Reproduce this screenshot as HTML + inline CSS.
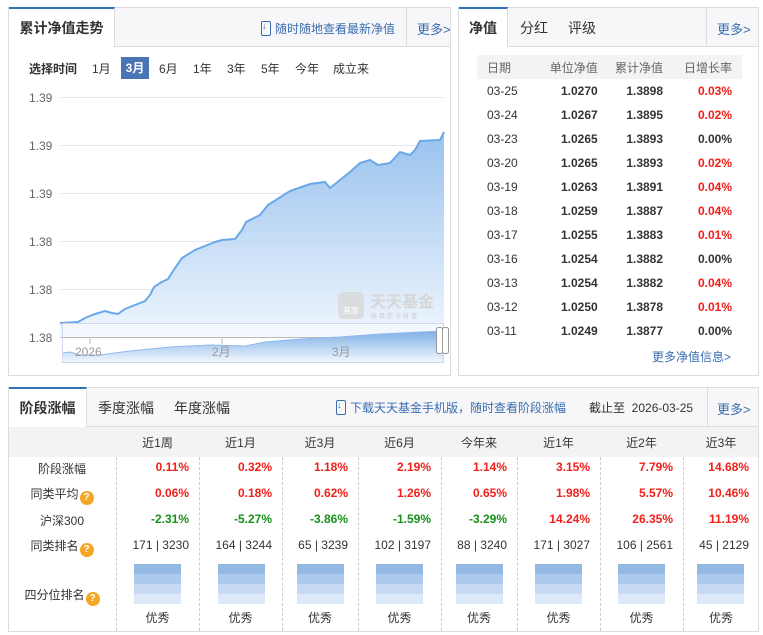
<!DOCTYPE html>
<html><head><meta charset="utf-8"><style>
*{margin:0;padding:0;box-sizing:border-box}
body{width:763px;height:635px;background:#fff;font-family:"Liberation Sans","Noto Sans CJK SC",sans-serif;font-size:12px;color:#333;position:relative;overflow:hidden}
.abs{position:absolute;white-space:nowrap}
.panel{position:absolute;border:1px solid #dcdcdc}
.tabbar{position:absolute;left:0;top:0;right:0;background:#f7f7f9;border-bottom:1px solid #dcdcdc}
.tab{position:absolute;top:-1px;background:#fff;border-top:2px solid #3070b8;border-right:1px solid #dcdcdc;font-size:14px;font-weight:bold;color:#333;text-align:center}
.t2{position:absolute;font-size:14px;color:#333;white-space:nowrap}
.more{position:absolute;color:#3a6db0;font-size:13px;white-space:nowrap}
.blue{color:#3a6db0}
.red{color:#f0201a;font-weight:bold}
.green{color:#18901a;font-weight:bold}
.q{display:inline-block;width:14px;height:14px;border-radius:7px;background:#f5a623;color:#fff;font-size:10px;line-height:14px;text-align:center;font-weight:bold;vertical-align:-2px;margin-left:1px}
.phone{display:inline-block;width:10px;height:15px;border:1.5px solid #3a6db0;border-radius:2px;vertical-align:-3px;margin-right:4px;position:relative}
.phone:after{content:"↓";position:absolute;left:0;top:-1px;font-size:9px;color:#3a6db0;font-weight:bold}
.ts{position:absolute;top:52px;font-size:12px}
</style></head><body>

<!-- left panel -->
<div class="panel" style="left:8px;top:7px;width:443px;height:369px">
 <div class="tabbar" style="height:39px">
  <div class="tab" style="left:0;width:106px;height:40px;line-height:38px">累计净值走势</div>
  <div class="abs blue" style="left:252px;top:12px;font-size:12px"><span class="phone"></span>随时随地查看最新净值</div>
  <div class="abs" style="left:397px;top:0;width:1px;height:39px;background:#dcdcdc"></div>
  <div class="more" style="left:408px;top:11px">更多&gt;</div>
 </div>
 <div class="ts" style="left:20px;font-weight:bold">选择时间</div>
 <div class="ts" style="left:83px">1月</div>
 <div class="abs" style="top:49px;left:112px;width:28px;height:22px;background:#4a74b4;color:#fff;font-weight:bold;font-size:12px;text-align:center;line-height:22px">3月</div>
 <div class="ts" style="left:150px">6月</div>
 <div class="ts" style="left:184px">1年</div>
 <div class="ts" style="left:218px">3年</div>
 <div class="ts" style="left:252px">5年</div>
 <div class="ts" style="left:286px">今年</div>
 <div class="ts" style="left:324px">成立来</div>
</div>
<svg class="abs" style="left:0;top:0" width="460" height="380">
 <defs>
  <linearGradient id="g" x1="0" y1="0" x2="0" y2="1"><stop offset="0" stop-color="#8dbbec"/><stop offset="1" stop-color="#eef5fd"/></linearGradient>
  <linearGradient id="g2" x1="0" y1="0" x2="0" y2="1"><stop offset="0" stop-color="#7fb0e8"/><stop offset="1" stop-color="#f0f6fd"/></linearGradient>
 </defs>
 <g stroke="#e3e6ee" stroke-width="1">
  <line x1="60" y1="97.5" x2="444" y2="97.5"/><line x1="60" y1="145.5" x2="444" y2="145.5"/>
  <line x1="60" y1="193.5" x2="444" y2="193.5"/><line x1="60" y1="241.5" x2="444" y2="241.5"/>
  <line x1="60" y1="289.5" x2="444" y2="289.5"/>
 </g>
 <g fill="#666" font-size="12" font-family="Liberation Sans">
  <text x="29" y="102">1.39</text><text x="29" y="150">1.39</text><text x="29" y="198">1.39</text>
  <text x="29" y="246">1.38</text><text x="29" y="294">1.38</text><text x="29" y="342">1.38</text>
 </g>
 <path d="M60,323 L78,322 L85,318 L95,314 L105,311 L112,313 L118,314 L125,309 L135,305 L145,301 L150,295 L154,287 L160,283 L168,279 L175,268 L182,258 L195,250 L205,246 L215,242 L222,240 L235,239 L242,230 L246,222 L260,215 L268,205 L290,191 L310,184 L325,182 L330,188 L340,180 L350,172 L360,163 L370,160 L378,165 L390,163 L400,152 L410,155 L415,150 L420,141 L440,140 L444,132 L444,337 L60,337 Z" fill="url(#g)" opacity="0.9"/>
 <path d="M60,323 L78,322 L85,318 L95,314 L105,311 L112,313 L118,314 L125,309 L135,305 L145,301 L150,295 L154,287 L160,283 L168,279 L175,268 L182,258 L195,250 L205,246 L215,242 L222,240 L235,239 L242,230 L246,222 L260,215 L268,205 L290,191 L310,184 L325,182 L330,188 L340,180 L350,172 L360,163 L370,160 L378,165 L390,163 L400,152 L410,155 L415,150 L420,141 L440,140 L444,132" fill="none" stroke="#6aa8e8" stroke-width="2"/>
 <rect x="338" y="292" width="26" height="27" rx="5" fill="#d8d8d8" opacity="0.8"/>
 <text x="343" y="313" font-size="8" fill="#fff" font-family="Noto Sans CJK SC">基金</text>
 <text x="370" y="307" font-size="16" font-weight="bold" fill="#d6d6d6" font-family="Noto Sans CJK SC">天天基金</text>
 <text x="371" y="318" font-size="6" fill="#ccc" font-family="Noto Sans CJK SC" letter-spacing="2">链接您与财富</text>
 <rect x="62" y="323" width="382" height="40" fill="#fff" opacity="0.35"/>
 <line x1="60" y1="337.5" x2="444" y2="337.5" stroke="#bbb"/>
 <path d="M62,353 L70,352 L80,355 L100,355 L130,351 L170,347 L210,345 L245,346 L265,342 L300,339 L340,337 L380,334 L420,332 L444,331 L444,362 L62,362 Z" fill="url(#g2)"/>
 <path d="M62,353 L70,352 L80,355 L100,355 L130,351 L170,347 L210,345 L245,346 L265,342 L300,339 L340,337 L380,334 L420,332 L444,331" fill="none" stroke="#8fb9ea" stroke-width="1"/>
 <rect x="62.5" y="323.5" width="381" height="39" fill="none" stroke="#cfd8e8"/>
 <line x1="90" y1="337" x2="90" y2="344" stroke="#bbb"/><line x1="222" y1="337" x2="222" y2="344" stroke="#bbb"/><line x1="342" y1="337" x2="342" y2="344" stroke="#bbb"/>
 <g fill="#999" font-size="12" font-family="Liberation Sans,Noto Sans CJK SC"><text x="75" y="356">2026</text><text x="212" y="356">2月</text><text x="332" y="356">3月</text></g>
 <rect x="436.5" y="327.5" width="6" height="26" rx="2" fill="#fff" stroke="#999"/>
 <rect x="442.5" y="327.5" width="6" height="26" rx="2" fill="#fff" stroke="#999"/>
</svg>

<!-- right panel -->
<div class="panel" style="left:458px;top:7px;width:301px;height:369px">
 <div class="tabbar" style="height:39px">
  <div class="tab" style="left:0;width:49px;height:40px;line-height:38px">净值</div>
  <div class="t2" style="left:61px;top:10px">分红</div>
  <div class="t2" style="left:109px;top:10px">评级</div>
  <div class="abs" style="left:247px;top:0;width:1px;height:39px;background:#dcdcdc"></div>
  <div class="more" style="left:258px;top:11px">更多&gt;</div>
 </div>
 <div class="abs" style="left:18px;top:47px;width:265px;height:24px;background:#f3f3f3"></div>
 <table class="abs" style="left:18px;top:47px;width:265px;border-collapse:collapse;font-size:12px">
  <tr style="height:24px;color:#666"><td style="padding-left:10px">日期</td><td align="right">单位净值</td><td align="right">累计净值</td><td align="right" style="padding-right:10px">日增长率</td></tr>
  <tr style="height:24px"><td style="padding-left:10px">03-25</td><td align="right"><b>1.0270</b></td><td align="right"><b>1.3898</b></td><td align="right" class="red" style="padding-right:10px">0.03%</td></tr>
  <tr style="height:24px"><td style="padding-left:10px">03-24</td><td align="right"><b>1.0267</b></td><td align="right"><b>1.3895</b></td><td align="right" class="red" style="padding-right:10px">0.02%</td></tr>
  <tr style="height:24px"><td style="padding-left:10px">03-23</td><td align="right"><b>1.0265</b></td><td align="right"><b>1.3893</b></td><td align="right" style="padding-right:10px;font-weight:bold">0.00%</td></tr>
  <tr style="height:24px"><td style="padding-left:10px">03-20</td><td align="right"><b>1.0265</b></td><td align="right"><b>1.3893</b></td><td align="right" class="red" style="padding-right:10px">0.02%</td></tr>
  <tr style="height:24px"><td style="padding-left:10px">03-19</td><td align="right"><b>1.0263</b></td><td align="right"><b>1.3891</b></td><td align="right" class="red" style="padding-right:10px">0.04%</td></tr>
  <tr style="height:24px"><td style="padding-left:10px">03-18</td><td align="right"><b>1.0259</b></td><td align="right"><b>1.3887</b></td><td align="right" class="red" style="padding-right:10px">0.04%</td></tr>
  <tr style="height:24px"><td style="padding-left:10px">03-17</td><td align="right"><b>1.0255</b></td><td align="right"><b>1.3883</b></td><td align="right" class="red" style="padding-right:10px">0.01%</td></tr>
  <tr style="height:24px"><td style="padding-left:10px">03-16</td><td align="right"><b>1.0254</b></td><td align="right"><b>1.3882</b></td><td align="right" style="padding-right:10px;font-weight:bold">0.00%</td></tr>
  <tr style="height:24px"><td style="padding-left:10px">03-13</td><td align="right"><b>1.0254</b></td><td align="right"><b>1.3882</b></td><td align="right" class="red" style="padding-right:10px">0.04%</td></tr>
  <tr style="height:24px"><td style="padding-left:10px">03-12</td><td align="right"><b>1.0250</b></td><td align="right"><b>1.3878</b></td><td align="right" class="red" style="padding-right:10px">0.01%</td></tr>
  <tr style="height:24px"><td style="padding-left:10px">03-11</td><td align="right"><b>1.0249</b></td><td align="right"><b>1.3877</b></td><td align="right" style="padding-right:10px;font-weight:bold">0.00%</td></tr>
 </table>
 <div class="abs blue" style="left:193px;top:340px">更多净值信息&gt;</div>
</div>

<!-- bottom panel -->
<div class="panel" style="left:8px;top:387px;width:751px;height:245px">
 <div class="tabbar" style="height:39px">
  <div class="tab" style="left:0;width:78px;height:40px;line-height:38px">阶段涨幅</div>
  <div class="t2" style="left:89px;top:10px">季度涨幅</div>
  <div class="t2" style="left:165px;top:10px">年度涨幅</div>
  <div class="abs blue" style="left:327px;top:11px;font-size:12px"><span class="phone"></span>下载天天基金手机版，随时查看阶段涨幅</div>
  <div class="abs" style="left:580px;top:11px;font-size:12px">截止至&nbsp;&nbsp;2026-03-25</div>
  <div class="abs" style="left:698px;top:0;width:1px;height:39px;background:#dcdcdc"></div>
  <div class="more" style="left:708px;top:11px">更多&gt;</div>
 </div>
 <div class="abs" style="left:0;top:39px;width:749px;height:30px;background:#f3f3f3"></div>
</div>
<div class="abs" style="left:0;top:0;width:763px;height:635px">
 <div class="abs" style="top:434px;left:116px;width:83px;text-align:center">近1周</div>
 <div class="abs" style="top:434px;left:199px;width:83px;text-align:center">近1月</div>
 <div class="abs" style="top:434px;left:282px;width:76px;text-align:center">近3月</div>
 <div class="abs" style="top:434px;left:358px;width:83px;text-align:center">近6月</div>
 <div class="abs" style="top:434px;left:441px;width:76px;text-align:center">今年来</div>
 <div class="abs" style="top:434px;left:517px;width:83px;text-align:center">近1年</div>
 <div class="abs" style="top:434px;left:600px;width:83px;text-align:center">近2年</div>
 <div class="abs" style="top:434px;left:683px;width:76px;text-align:center">近3年</div>
 <div class="abs" style="left:116px;top:457px;height:174px;border-left:1px dashed #ccc"></div>
 <div class="abs" style="left:199px;top:457px;height:174px;border-left:1px dashed #ccc"></div>
 <div class="abs" style="left:282px;top:457px;height:174px;border-left:1px dashed #ccc"></div>
 <div class="abs" style="left:358px;top:457px;height:174px;border-left:1px dashed #ccc"></div>
 <div class="abs" style="left:441px;top:457px;height:174px;border-left:1px dashed #ccc"></div>
 <div class="abs" style="left:517px;top:457px;height:174px;border-left:1px dashed #ccc"></div>
 <div class="abs" style="left:600px;top:457px;height:174px;border-left:1px dashed #ccc"></div>
 <div class="abs" style="left:683px;top:457px;height:174px;border-left:1px dashed #ccc"></div>
 <div class="abs" style="top:460px;left:8px;width:108px;text-align:center">阶段涨幅</div>
 <div class="abs" style="top:485px;left:8px;width:108px;text-align:center">同类平均<span class="q">?</span></div>
 <div class="abs" style="top:512px;left:8px;width:108px;text-align:center">沪深300</div>
 <div class="abs" style="top:537px;left:8px;width:108px;text-align:center">同类排名<span class="q">?</span></div>
 <div class="abs" style="top:586px;left:8px;width:108px;text-align:center">四分位排名<span class="q">?</span></div>
 <table class="abs" style="left:116px;top:454px;width:643px;border-collapse:collapse;table-layout:fixed">
  <colgroup><col style="width:83px"><col style="width:83px"><col style="width:76px"><col style="width:83px"><col style="width:76px"><col style="width:83px"><col style="width:83px"><col style="width:76px"></colgroup>
  <tr style="height:26px" class="red"><td align="right" style="padding-right:10px">0.11%</td><td align="right" style="padding-right:10px">0.32%</td><td align="right" style="padding-right:10px">1.18%</td><td align="right" style="padding-right:10px">2.19%</td><td align="right" style="padding-right:10px">1.14%</td><td align="right" style="padding-right:10px">3.15%</td><td align="right" style="padding-right:10px">7.79%</td><td align="right" style="padding-right:10px">14.68%</td></tr>
  <tr style="height:26px" class="red"><td align="right" style="padding-right:10px">0.06%</td><td align="right" style="padding-right:10px">0.18%</td><td align="right" style="padding-right:10px">0.62%</td><td align="right" style="padding-right:10px">1.26%</td><td align="right" style="padding-right:10px">0.65%</td><td align="right" style="padding-right:10px">1.98%</td><td align="right" style="padding-right:10px">5.57%</td><td align="right" style="padding-right:10px">10.46%</td></tr>
  <tr style="height:26px"><td align="right" class="green" style="padding-right:10px">-2.31%</td><td align="right" class="green" style="padding-right:10px">-5.27%</td><td align="right" class="green" style="padding-right:10px">-3.86%</td><td align="right" class="green" style="padding-right:10px">-1.59%</td><td align="right" class="green" style="padding-right:10px">-3.29%</td><td align="right" class="red" style="padding-right:10px">14.24%</td><td align="right" class="red" style="padding-right:10px">26.35%</td><td align="right" class="red" style="padding-right:10px">11.19%</td></tr>
  <tr style="height:26px"><td align="right" style="padding-right:10px">171 | 3230</td><td align="right" style="padding-right:10px">164 | 3244</td><td align="right" style="padding-right:10px">65 | 3239</td><td align="right" style="padding-right:10px">102 | 3197</td><td align="right" style="padding-right:10px">88 | 3240</td><td align="right" style="padding-right:10px">171 | 3027</td><td align="right" style="padding-right:10px">106 | 2561</td><td align="right" style="padding-right:10px">45 | 2129</td></tr>
 </table>
 <svg class="abs" style="left:0;top:0" width="763" height="635">
  <defs>
  <g id="qb">
   <rect x="0" y="564" width="47" height="10" fill="#94b8e4"/><rect x="0" y="574" width="47" height="10" fill="#adc9ee"/>
   <rect x="0" y="584" width="47" height="10" fill="#c6daf4"/><rect x="0" y="594" width="47" height="10" fill="#dde9f9"/>
  </g>
  </defs>
  <use href="#qb" x="134"/><use href="#qb" x="218"/><use href="#qb" x="297"/><use href="#qb" x="376"/><use href="#qb" x="456"/><use href="#qb" x="535"/><use href="#qb" x="618"/><use href="#qb" x="697"/>
 </svg>
 <div class="abs" style="top:609px;left:116px;width:83px;text-align:center">优秀</div>
 <div class="abs" style="top:609px;left:199px;width:83px;text-align:center">优秀</div>
 <div class="abs" style="top:609px;left:282px;width:76px;text-align:center">优秀</div>
 <div class="abs" style="top:609px;left:358px;width:83px;text-align:center">优秀</div>
 <div class="abs" style="top:609px;left:441px;width:76px;text-align:center">优秀</div>
 <div class="abs" style="top:609px;left:517px;width:83px;text-align:center">优秀</div>
 <div class="abs" style="top:609px;left:600px;width:83px;text-align:center">优秀</div>
 <div class="abs" style="top:609px;left:683px;width:76px;text-align:center">优秀</div>
</div>
</body></html>
